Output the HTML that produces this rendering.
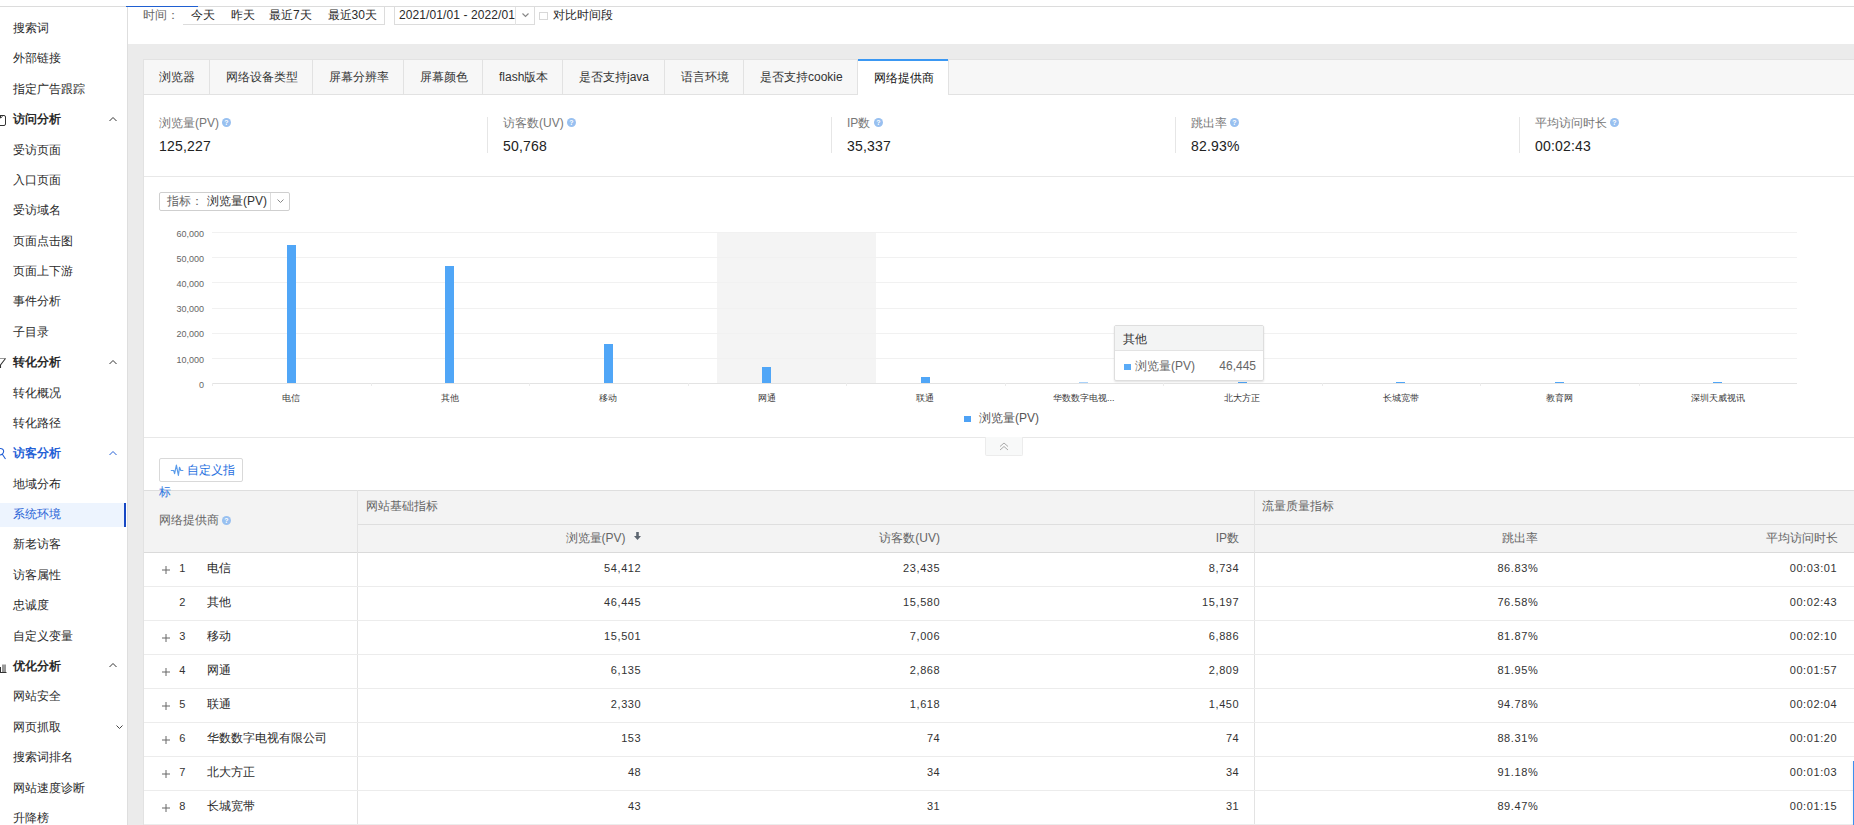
<!DOCTYPE html><html><head><meta charset="utf-8"><style>
*{margin:0;padding:0;box-sizing:border-box}
html,body{width:1854px;height:825px;overflow:hidden;background:#fff;font-family:"Liberation Sans",sans-serif;color:#2a2a2a}
.a{position:absolute}
.t{position:absolute;white-space:nowrap;font-size:12px;line-height:12px}
.hl{position:absolute;height:1px}
.vl{position:absolute;width:1px}
</style></head><body>
<div class="a" style="left:128px;top:7px;width:1726px;height:818px;background:#ebebeb"></div>
<div class="a" style="left:128px;top:7px;width:1726px;height:37px;background:#fff"></div>
<div class="a" style="left:0px;top:6px;width:1854px;height:1px;background:#dcdcdc"></div>
<div class="a" style="left:0px;top:7px;width:127px;height:818px;background:#fff"></div>
<div class="a" style="left:127px;top:7px;width:1px;height:818px;background:#dedede"></div>
<div class="t" style="left:13px;top:22.00px;color:#2a2a2a;">搜索词</div>
<div class="t" style="left:13px;top:52.38px;color:#2a2a2a;">外部链接</div>
<div class="t" style="left:13px;top:82.76px;color:#2a2a2a;">指定广告跟踪</div>
<svg class="a" style="left:109px;top:116.64px" width="8" height="5" viewBox="0 0 8 5"><path d="M0.5 4 L4 0.5 L7.5 4" fill="none" stroke="#333" stroke-width="1"/></svg>
<div class="t" style="left:13px;top:113.14px;color:#2a2a2a;font-weight:bold;">访问分析</div>
<div class="t" style="left:13px;top:143.52px;color:#2a2a2a;">受访页面</div>
<div class="t" style="left:13px;top:173.90px;color:#2a2a2a;">入口页面</div>
<div class="t" style="left:13px;top:204.28px;color:#2a2a2a;">受访域名</div>
<div class="t" style="left:13px;top:234.66px;color:#2a2a2a;">页面点击图</div>
<div class="t" style="left:13px;top:265.04px;color:#2a2a2a;">页面上下游</div>
<div class="t" style="left:13px;top:295.42px;color:#2a2a2a;">事件分析</div>
<div class="t" style="left:13px;top:325.80px;color:#2a2a2a;">子目录</div>
<svg class="a" style="left:109px;top:359.68px" width="8" height="5" viewBox="0 0 8 5"><path d="M0.5 4 L4 0.5 L7.5 4" fill="none" stroke="#333" stroke-width="1"/></svg>
<div class="t" style="left:13px;top:356.18px;color:#2a2a2a;font-weight:bold;">转化分析</div>
<div class="t" style="left:13px;top:386.56px;color:#2a2a2a;">转化概况</div>
<div class="t" style="left:13px;top:416.94px;color:#2a2a2a;">转化路径</div>
<svg class="a" style="left:109px;top:450.82px" width="8" height="5" viewBox="0 0 8 5"><path d="M0.5 4 L4 0.5 L7.5 4" fill="none" stroke="#2561d6" stroke-width="1"/></svg>
<div class="t" style="left:13px;top:447.32px;color:#2561d6;font-weight:bold;">访客分析</div>
<div class="t" style="left:13px;top:477.70px;color:#2a2a2a;">地域分布</div>
<div class="a" style="left:0px;top:503px;width:124px;height:24px;background:#edf4fe"></div>
<div class="a" style="left:124px;top:503px;width:2px;height:24px;background:#1748c4"></div>
<div class="t" style="left:13px;top:508.08px;color:#2561d6;">系统环境</div>
<div class="t" style="left:13px;top:538.46px;color:#2a2a2a;">新老访客</div>
<div class="t" style="left:13px;top:568.84px;color:#2a2a2a;">访客属性</div>
<div class="t" style="left:13px;top:599.22px;color:#2a2a2a;">忠诚度</div>
<div class="t" style="left:13px;top:629.60px;color:#2a2a2a;">自定义变量</div>
<svg class="a" style="left:109px;top:663.48px" width="8" height="5" viewBox="0 0 8 5"><path d="M0.5 4 L4 0.5 L7.5 4" fill="none" stroke="#333" stroke-width="1"/></svg>
<div class="t" style="left:13px;top:659.98px;color:#2a2a2a;font-weight:bold;">优化分析</div>
<div class="t" style="left:13px;top:690.36px;color:#2a2a2a;">网站安全</div>
<svg class="a" style="left:116px;top:724.74px" width="7" height="5" viewBox="0 0 7 5"><path d="M0.5 0.5 L3.5 3.5 L6.5 0.5" fill="none" stroke="#444" stroke-width="1"/></svg>
<div class="t" style="left:13px;top:720.74px;color:#2a2a2a;">网页抓取</div>
<div class="t" style="left:13px;top:751.12px;color:#2a2a2a;">搜索词排名</div>
<div class="t" style="left:13px;top:781.50px;color:#2a2a2a;">网站速度诊断</div>
<div class="t" style="left:13px;top:811.88px;color:#2a2a2a;">升降榜</div>
<svg class="a" style="left:0px;top:111.14px" width="8" height="16" viewBox="0 0 8 16"><path d="M-5 4.5 H4 Q5.5 4.5 5.5 6 V13 Q5.5 14.5 4 14.5 H-5" fill="none" stroke="#333" stroke-width="1"/><path d="M0.5 4.5 V7 L2.5 5.5" fill="none" stroke="#333" stroke-width="1"/></svg>
<svg class="a" style="left:0px;top:354.18px" width="8" height="16" viewBox="0 0 8 16"><path d="M-2 4.5 H5.5" stroke="#999" stroke-width="1"/><path d="M5.5 4.5 L0.5 11 V14" fill="none" stroke="#333" stroke-width="1.1"/></svg>
<svg class="a" style="left:0px;top:445.32px" width="8" height="16" viewBox="0 0 8 16"><path d="M-3 5.5 Q0 2 3 4.5 Q4.5 6.5 2.5 9 Q1 10 -1 10 M2.5 9.5 L5.5 14" fill="none" stroke="#2561d6" stroke-width="1.1"/></svg>
<svg class="a" style="left:0px;top:657.98px" width="8" height="16" viewBox="0 0 8 16"><path d="M0.5 9 V14 M3 6.5 V14 M5 6.5 V14 M-1 14.5 H6.5" fill="none" stroke="#333" stroke-width="1"/></svg>
<div class="t" style="left:143px;top:9px;color:#666">时间：</div>
<div class="a" style="left:183px;top:6px;width:202px;height:19px;border:1px solid #dcdcdc;border-top:none;border-left:none;background:#fff"></div>
<div class="t" style="left:191px;top:9px;">今天</div>
<div class="t" style="left:230.5px;top:9px;">昨天</div>
<div class="t" style="left:269px;top:9px;">最近7天</div>
<div class="t" style="left:327.5px;top:9px;">最近30天</div>
<div class="a" style="left:394px;top:6px;width:141px;height:19px;border:1px solid #dcdcdc;border-top:none;background:#fff"></div>
<div class="a" style="left:515px;top:6px;width:1px;height:19px;background:#e3e3e3"></div>
<div class="t" style="left:399px;top:9px;letter-spacing:0.1px">2021/01/01 - 2022/01</div>
<svg class="a" style="left:522px;top:13px" width="7" height="5" viewBox="0 0 7 5"><path d="M0.5 0.5 L3.5 3.5 L6.5 0.5" fill="none" stroke="#888" stroke-width="1.2"/></svg>
<div class="a" style="left:539px;top:12px;width:9px;height:8px;border:1px solid #d8d8d8;background:#fff"></div>
<div class="t" style="left:553px;top:9px;">对比时间段</div>
<div class="a" style="left:128px;top:6px;width:1726px;height:1px;background:#dcdcdc"></div>
<div class="a" style="left:126px;top:6px;width:72px;height:1px;background:#1f5fd1"></div>
<div class="a" style="left:143px;top:59px;width:1711px;height:766px;background:#fff;border-left:1px solid #e2e2e2;border-top:1px solid #e2e2e2"></div>
<div class="a" style="left:144px;top:60px;width:1710px;height:34px;background:#f7f7f7"></div>
<div class="a" style="left:144px;top:94px;width:1710px;height:1px;background:#e2e2e2"></div>
<div class="t" style="left:159px;top:71px;color:#333">浏览器</div>
<div class="a" style="left:209px;top:60px;width:1px;height:34px;background:#e2e2e2"></div>
<div class="t" style="left:226px;top:71px;color:#333">网络设备类型</div>
<div class="a" style="left:312px;top:60px;width:1px;height:34px;background:#e2e2e2"></div>
<div class="t" style="left:329px;top:71px;color:#333">屏幕分辨率</div>
<div class="a" style="left:403px;top:60px;width:1px;height:34px;background:#e2e2e2"></div>
<div class="t" style="left:420px;top:71px;color:#333">屏幕颜色</div>
<div class="a" style="left:482px;top:60px;width:1px;height:34px;background:#e2e2e2"></div>
<div class="t" style="left:499px;top:71px;color:#333">flash版本</div>
<div class="a" style="left:562px;top:60px;width:1px;height:34px;background:#e2e2e2"></div>
<div class="t" style="left:579px;top:71px;color:#333">是否支持java</div>
<div class="a" style="left:664px;top:60px;width:1px;height:34px;background:#e2e2e2"></div>
<div class="t" style="left:681px;top:71px;color:#333">语言环境</div>
<div class="a" style="left:743px;top:60px;width:1px;height:34px;background:#e2e2e2"></div>
<div class="t" style="left:760px;top:71px;color:#333">是否支持cookie</div>
<div class="a" style="left:857px;top:60px;width:1px;height:34px;background:#e2e2e2"></div>
<div class="a" style="left:858px;top:60px;width:90px;height:35px;background:#fff"></div>
<div class="a" style="left:858px;top:59px;width:90px;height:2px;background:#3b98f3"></div>
<div class="t" style="left:874px;top:71.5px;color:#111">网络提供商</div>
<div class="a" style="left:948px;top:60px;width:1px;height:34px;background:#e2e2e2"></div>
<div class="t" style="left:159px;top:117px;color:#777">浏览量(PV)</div>
<div class="a" style="left:222px;top:118px;width:9px;height:9px;border-radius:50%;background:#98c0f0;color:#fff;font-size:7px;line-height:9px;text-align:center;font-weight:bold">?</div>
<div class="t" style="left:159px;top:138.5px;font-size:14px;line-height:14px;color:#222;letter-spacing:0.2px">125,227</div>
<div class="a" style="left:487px;top:117px;width:1px;height:36px;background:#e6e6e6"></div>
<div class="t" style="left:503px;top:117px;color:#777">访客数(UV)</div>
<div class="a" style="left:567px;top:118px;width:9px;height:9px;border-radius:50%;background:#98c0f0;color:#fff;font-size:7px;line-height:9px;text-align:center;font-weight:bold">?</div>
<div class="t" style="left:503px;top:138.5px;font-size:14px;line-height:14px;color:#222;letter-spacing:0.2px">50,768</div>
<div class="a" style="left:831px;top:117px;width:1px;height:36px;background:#e6e6e6"></div>
<div class="t" style="left:847px;top:117px;color:#777">IP数</div>
<div class="a" style="left:874px;top:118px;width:9px;height:9px;border-radius:50%;background:#98c0f0;color:#fff;font-size:7px;line-height:9px;text-align:center;font-weight:bold">?</div>
<div class="t" style="left:847px;top:138.5px;font-size:14px;line-height:14px;color:#222;letter-spacing:0.2px">35,337</div>
<div class="a" style="left:1175px;top:117px;width:1px;height:36px;background:#e6e6e6"></div>
<div class="t" style="left:1191px;top:117px;color:#777">跳出率</div>
<div class="a" style="left:1230px;top:118px;width:9px;height:9px;border-radius:50%;background:#98c0f0;color:#fff;font-size:7px;line-height:9px;text-align:center;font-weight:bold">?</div>
<div class="t" style="left:1191px;top:138.5px;font-size:14px;line-height:14px;color:#222;letter-spacing:0.2px">82.93%</div>
<div class="a" style="left:1519px;top:117px;width:1px;height:36px;background:#e6e6e6"></div>
<div class="t" style="left:1535px;top:117px;color:#777">平均访问时长</div>
<div class="a" style="left:1610px;top:118px;width:9px;height:9px;border-radius:50%;background:#98c0f0;color:#fff;font-size:7px;line-height:9px;text-align:center;font-weight:bold">?</div>
<div class="t" style="left:1535px;top:138.5px;font-size:14px;line-height:14px;color:#222;letter-spacing:0.2px">00:02:43</div>
<div class="a" style="left:144px;top:176px;width:1710px;height:1px;background:#e8e8e8"></div>
<div class="a" style="left:159px;top:192px;width:131px;height:19px;border:1px solid #cfcfcf;border-radius:2px;background:#fff"></div>
<div class="a" style="left:270px;top:193px;width:1px;height:17px;background:#dcdcdc"></div>
<div class="t" style="left:167px;top:195px;color:#666">指标：</div>
<div class="t" style="left:207px;top:195px;color:#333">浏览量(PV)</div>
<svg class="a" style="left:277px;top:199px" width="7" height="5" viewBox="0 0 7 5"><path d="M0.5 0.5 L3.5 3.5 L6.5 0.5" fill="none" stroke="#888" stroke-width="1"/></svg>
<div class="a" style="left:717px;top:232px;width:159px;height:151px;background:#f4f4f4"></div>
<div class="hl" style="left:212px;top:232.00px;width:1585px;background:#f1f1f1"></div>
<div class="t" style="right:1650px;top:229.50px;text-align:right;font-size:9px;line-height:9px;color:#666">60,000</div>
<div class="hl" style="left:212px;top:257.22px;width:1585px;background:#f1f1f1"></div>
<div class="t" style="right:1650px;top:254.72px;text-align:right;font-size:9px;line-height:9px;color:#666">50,000</div>
<div class="hl" style="left:212px;top:282.43px;width:1585px;background:#f1f1f1"></div>
<div class="t" style="right:1650px;top:279.93px;text-align:right;font-size:9px;line-height:9px;color:#666">40,000</div>
<div class="hl" style="left:212px;top:307.65px;width:1585px;background:#f1f1f1"></div>
<div class="t" style="right:1650px;top:305.15px;text-align:right;font-size:9px;line-height:9px;color:#666">30,000</div>
<div class="hl" style="left:212px;top:332.87px;width:1585px;background:#f1f1f1"></div>
<div class="t" style="right:1650px;top:330.37px;text-align:right;font-size:9px;line-height:9px;color:#666">20,000</div>
<div class="hl" style="left:212px;top:358.08px;width:1585px;background:#f1f1f1"></div>
<div class="t" style="right:1650px;top:355.58px;text-align:right;font-size:9px;line-height:9px;color:#666">10,000</div>
<div class="hl" style="left:212px;top:383.30px;width:1585px;background:#e3e3e3"></div>
<div class="t" style="right:1650px;top:380.80px;text-align:right;font-size:9px;line-height:9px;color:#666">0</div>
<div class="a" style="left:286.75px;top:245.49px;width:9px;height:137.81px;background:#50a6f7"></div>
<div class="t" style="left:191.25px;top:394px;width:200px;text-align:center;font-size:9px;line-height:9px;color:#3a3a3a">电信</div>
<div class="vl" style="left:212.00px;top:383px;height:3px;background:#ececec"></div>
<div class="a" style="left:445.25px;top:265.58px;width:9px;height:117.72px;background:#50a6f7"></div>
<div class="t" style="left:349.75px;top:394px;width:200px;text-align:center;font-size:9px;line-height:9px;color:#3a3a3a">其他</div>
<div class="vl" style="left:370.50px;top:383px;height:3px;background:#ececec"></div>
<div class="a" style="left:603.75px;top:343.61px;width:9px;height:39.69px;background:#50a6f7"></div>
<div class="t" style="left:508.25px;top:394px;width:200px;text-align:center;font-size:9px;line-height:9px;color:#3a3a3a">移动</div>
<div class="vl" style="left:529.00px;top:383px;height:3px;background:#ececec"></div>
<div class="a" style="left:762.25px;top:367.23px;width:9px;height:16.07px;background:#50a6f7"></div>
<div class="t" style="left:666.75px;top:394px;width:200px;text-align:center;font-size:9px;line-height:9px;color:#3a3a3a">网通</div>
<div class="vl" style="left:687.50px;top:383px;height:3px;background:#ececec"></div>
<div class="a" style="left:920.75px;top:376.82px;width:9px;height:6.48px;background:#50a6f7"></div>
<div class="t" style="left:825.25px;top:394px;width:200px;text-align:center;font-size:9px;line-height:9px;color:#3a3a3a">联通</div>
<div class="vl" style="left:846.00px;top:383px;height:3px;background:#ececec"></div>
<div class="a" style="left:1079.25px;top:381.80px;width:9px;height:1.50px;background:#a9d2fa"></div>
<div class="t" style="left:983.75px;top:394px;width:200px;text-align:center;font-size:9px;line-height:9px;color:#3a3a3a">华数数字电视...</div>
<div class="vl" style="left:1004.50px;top:383px;height:3px;background:#ececec"></div>
<div class="a" style="left:1237.75px;top:381.80px;width:9px;height:1.50px;background:#50a6f7"></div>
<div class="t" style="left:1142.25px;top:394px;width:200px;text-align:center;font-size:9px;line-height:9px;color:#3a3a3a">北大方正</div>
<div class="vl" style="left:1163.00px;top:383px;height:3px;background:#ececec"></div>
<div class="a" style="left:1396.25px;top:381.80px;width:9px;height:1.50px;background:#50a6f7"></div>
<div class="t" style="left:1300.75px;top:394px;width:200px;text-align:center;font-size:9px;line-height:9px;color:#3a3a3a">长城宽带</div>
<div class="vl" style="left:1321.50px;top:383px;height:3px;background:#ececec"></div>
<div class="a" style="left:1554.75px;top:381.80px;width:9px;height:1.50px;background:#50a6f7"></div>
<div class="t" style="left:1459.25px;top:394px;width:200px;text-align:center;font-size:9px;line-height:9px;color:#3a3a3a">教育网</div>
<div class="vl" style="left:1480.00px;top:383px;height:3px;background:#ececec"></div>
<div class="a" style="left:1713.25px;top:381.80px;width:9px;height:1.50px;background:#50a6f7"></div>
<div class="t" style="left:1617.75px;top:394px;width:200px;text-align:center;font-size:9px;line-height:9px;color:#3a3a3a">深圳天威视讯</div>
<div class="vl" style="left:1638.50px;top:383px;height:3px;background:#ececec"></div>
<div class="a" style="left:1114px;top:325px;width:150px;height:56px;background:rgba(255,255,255,0.96);border:1px solid #dedede;border-radius:2px;box-shadow:0 1px 2px rgba(0,0,0,0.12)"></div>
<div class="a" style="left:1115px;top:326px;width:148px;height:25px;background:#f3f4f4;border-bottom:1px solid #e3e3e3"></div>
<div class="t" style="left:1123px;top:333px;color:#333">其他</div>
<div class="a" style="left:1124px;top:364px;width:7px;height:6px;background:#5aabf7"></div>
<div class="t" style="left:1135px;top:360px;color:#666">浏览量(PV)</div>
<div class="t" style="right:598px;top:360px;text-align:right;color:#666">46,445</div>
<div class="a" style="left:964px;top:416px;width:7px;height:6px;background:#4ea2f5"></div>
<div class="t" style="left:979px;top:412px;color:#555">浏览量(PV)</div>
<div class="a" style="left:144px;top:437px;width:1710px;height:1px;background:#e8e8e8"></div>
<div class="a" style="left:985px;top:437px;width:38px;height:19px;background:#f8f9f9;border:1px solid #ececec;border-top:none;border-radius:0 0 2px 2px"></div>
<svg class="a" style="left:999px;top:442px" width="10" height="9" viewBox="0 0 10 9"><path d="M1 4.5 L5 1 L9 4.5 M1 8 L5 4.5 L9 8" fill="none" stroke="#aaa" stroke-width="1"/></svg>
<div class="a" style="left:159px;top:458px;width:84px;height:24px;border:1px solid #d9d9d9;border-radius:2px;background:#fff"></div>
<svg class="a" style="left:165px;top:458px" width="30" height="24" viewBox="0 0 30 24"><path d="M6.3 12.5 H8.7 L9.6 15.7 L11.4 7.2 L13.4 17.5 L14.5 9.3 L15.8 12.5 H17.9" fill="none" stroke="#5b9cea" stroke-width="1.2" stroke-linejoin="round" stroke-linecap="round"/></svg>
<div class="t" style="left:187px;top:463.5px;color:#1f6fe0">自定义指</div>
<div class="a" style="left:144px;top:490px;width:1710px;height:62px;background:#f3f3f3"></div>
<div class="a" style="left:144px;top:490px;width:1710px;height:1px;background:#dedede"></div>
<div class="a" style="left:357px;top:524px;width:1497px;height:1px;background:#dedede"></div>
<div class="a" style="left:144px;top:552px;width:1710px;height:1px;background:#dadada"></div>
<div class="a" style="left:357px;top:490px;width:1px;height:335px;background:#e3e3e3"></div>
<div class="a" style="left:1254px;top:490px;width:1px;height:335px;background:#e3e3e3"></div>
<div class="t" style="left:159px;top:485.5px;color:#2a74e0">标</div>
<div class="t" style="left:158.5px;top:514px;color:#666">网络提供商</div>
<div class="a" style="left:222px;top:516px;width:9px;height:9px;border-radius:50%;background:#98c0f0;color:#fff;font-size:7px;line-height:9px;text-align:center;font-weight:bold">?</div>
<div class="t" style="left:365.5px;top:500px;color:#666">网站基础指标</div>
<div class="t" style="left:1262px;top:500px;color:#666">流量质量指标</div>
<div class="t" style="right:1228.5px;top:532px;text-align:right;color:#666">浏览量(PV)</div>
<div class="t" style="right:914px;top:532px;text-align:right;color:#666">访客数(UV)</div>
<div class="t" style="right:615px;top:532px;text-align:right;color:#666">IP数</div>
<div class="t" style="right:316px;top:532px;text-align:right;color:#666">跳出率</div>
<div class="t" style="right:16.5px;top:532px;text-align:right;color:#666">平均访问时长</div>
<svg class="a" style="left:634px;top:532px" width="7" height="8" viewBox="0 0 7 8"><path d="M2.2 0 H4.8 V4 H7 L3.5 8 L0 4 H2.2 Z" fill="#5d6670"/></svg>
<svg class="a" style="left:162px;top:565.5px" width="8" height="8" viewBox="0 0 8 8"><path d="M0 4 H8 M4 0 V8" stroke="#666" stroke-width="1"/></svg>
<div class="t" style="left:172.3px;top:563.0px;width:20px;text-align:center;color:#333;font-size:11px;line-height:11px">1</div>
<div class="t" style="left:207px;top:561.5px;color:#2a2a2a">电信</div>
<div class="t" style="right:1212.7px;top:563.0px;text-align:right;color:#333;font-size:11px;line-height:11px;letter-spacing:0.6px">54,412</div>
<div class="t" style="right:913.7px;top:563.0px;text-align:right;color:#333;font-size:11px;line-height:11px;letter-spacing:0.6px">23,435</div>
<div class="t" style="right:614.7px;top:563.0px;text-align:right;color:#333;font-size:11px;line-height:11px;letter-spacing:0.6px">8,734</div>
<div class="t" style="right:315.70000000000005px;top:563.0px;text-align:right;color:#333;font-size:11px;line-height:11px;letter-spacing:0.6px">86.83%</div>
<div class="t" style="right:16.700000000000045px;top:563.0px;text-align:right;color:#333;font-size:11px;line-height:11px;letter-spacing:0.6px">00:03:01</div>
<div class="a" style="left:144px;top:586px;width:1710px;height:1px;background:#ececec"></div>
<div class="t" style="left:172.3px;top:597.0px;width:20px;text-align:center;color:#333;font-size:11px;line-height:11px">2</div>
<div class="t" style="left:207px;top:595.5px;color:#2a2a2a">其他</div>
<div class="t" style="right:1212.7px;top:597.0px;text-align:right;color:#333;font-size:11px;line-height:11px;letter-spacing:0.6px">46,445</div>
<div class="t" style="right:913.7px;top:597.0px;text-align:right;color:#333;font-size:11px;line-height:11px;letter-spacing:0.6px">15,580</div>
<div class="t" style="right:614.7px;top:597.0px;text-align:right;color:#333;font-size:11px;line-height:11px;letter-spacing:0.6px">15,197</div>
<div class="t" style="right:315.70000000000005px;top:597.0px;text-align:right;color:#333;font-size:11px;line-height:11px;letter-spacing:0.6px">76.58%</div>
<div class="t" style="right:16.700000000000045px;top:597.0px;text-align:right;color:#333;font-size:11px;line-height:11px;letter-spacing:0.6px">00:02:43</div>
<div class="a" style="left:144px;top:620px;width:1710px;height:1px;background:#ececec"></div>
<svg class="a" style="left:162px;top:633.5px" width="8" height="8" viewBox="0 0 8 8"><path d="M0 4 H8 M4 0 V8" stroke="#666" stroke-width="1"/></svg>
<div class="t" style="left:172.3px;top:631.0px;width:20px;text-align:center;color:#333;font-size:11px;line-height:11px">3</div>
<div class="t" style="left:207px;top:629.5px;color:#2a2a2a">移动</div>
<div class="t" style="right:1212.7px;top:631.0px;text-align:right;color:#333;font-size:11px;line-height:11px;letter-spacing:0.6px">15,501</div>
<div class="t" style="right:913.7px;top:631.0px;text-align:right;color:#333;font-size:11px;line-height:11px;letter-spacing:0.6px">7,006</div>
<div class="t" style="right:614.7px;top:631.0px;text-align:right;color:#333;font-size:11px;line-height:11px;letter-spacing:0.6px">6,886</div>
<div class="t" style="right:315.70000000000005px;top:631.0px;text-align:right;color:#333;font-size:11px;line-height:11px;letter-spacing:0.6px">81.87%</div>
<div class="t" style="right:16.700000000000045px;top:631.0px;text-align:right;color:#333;font-size:11px;line-height:11px;letter-spacing:0.6px">00:02:10</div>
<div class="a" style="left:144px;top:654px;width:1710px;height:1px;background:#ececec"></div>
<svg class="a" style="left:162px;top:667.5px" width="8" height="8" viewBox="0 0 8 8"><path d="M0 4 H8 M4 0 V8" stroke="#666" stroke-width="1"/></svg>
<div class="t" style="left:172.3px;top:665.0px;width:20px;text-align:center;color:#333;font-size:11px;line-height:11px">4</div>
<div class="t" style="left:207px;top:663.5px;color:#2a2a2a">网通</div>
<div class="t" style="right:1212.7px;top:665.0px;text-align:right;color:#333;font-size:11px;line-height:11px;letter-spacing:0.6px">6,135</div>
<div class="t" style="right:913.7px;top:665.0px;text-align:right;color:#333;font-size:11px;line-height:11px;letter-spacing:0.6px">2,868</div>
<div class="t" style="right:614.7px;top:665.0px;text-align:right;color:#333;font-size:11px;line-height:11px;letter-spacing:0.6px">2,809</div>
<div class="t" style="right:315.70000000000005px;top:665.0px;text-align:right;color:#333;font-size:11px;line-height:11px;letter-spacing:0.6px">81.95%</div>
<div class="t" style="right:16.700000000000045px;top:665.0px;text-align:right;color:#333;font-size:11px;line-height:11px;letter-spacing:0.6px">00:01:57</div>
<div class="a" style="left:144px;top:688px;width:1710px;height:1px;background:#ececec"></div>
<svg class="a" style="left:162px;top:701.5px" width="8" height="8" viewBox="0 0 8 8"><path d="M0 4 H8 M4 0 V8" stroke="#666" stroke-width="1"/></svg>
<div class="t" style="left:172.3px;top:699.0px;width:20px;text-align:center;color:#333;font-size:11px;line-height:11px">5</div>
<div class="t" style="left:207px;top:697.5px;color:#2a2a2a">联通</div>
<div class="t" style="right:1212.7px;top:699.0px;text-align:right;color:#333;font-size:11px;line-height:11px;letter-spacing:0.6px">2,330</div>
<div class="t" style="right:913.7px;top:699.0px;text-align:right;color:#333;font-size:11px;line-height:11px;letter-spacing:0.6px">1,618</div>
<div class="t" style="right:614.7px;top:699.0px;text-align:right;color:#333;font-size:11px;line-height:11px;letter-spacing:0.6px">1,450</div>
<div class="t" style="right:315.70000000000005px;top:699.0px;text-align:right;color:#333;font-size:11px;line-height:11px;letter-spacing:0.6px">94.78%</div>
<div class="t" style="right:16.700000000000045px;top:699.0px;text-align:right;color:#333;font-size:11px;line-height:11px;letter-spacing:0.6px">00:02:04</div>
<div class="a" style="left:144px;top:722px;width:1710px;height:1px;background:#ececec"></div>
<svg class="a" style="left:162px;top:735.5px" width="8" height="8" viewBox="0 0 8 8"><path d="M0 4 H8 M4 0 V8" stroke="#666" stroke-width="1"/></svg>
<div class="t" style="left:172.3px;top:733.0px;width:20px;text-align:center;color:#333;font-size:11px;line-height:11px">6</div>
<div class="t" style="left:207px;top:731.5px;color:#2a2a2a">华数数字电视有限公司</div>
<div class="t" style="right:1212.7px;top:733.0px;text-align:right;color:#333;font-size:11px;line-height:11px;letter-spacing:0.6px">153</div>
<div class="t" style="right:913.7px;top:733.0px;text-align:right;color:#333;font-size:11px;line-height:11px;letter-spacing:0.6px">74</div>
<div class="t" style="right:614.7px;top:733.0px;text-align:right;color:#333;font-size:11px;line-height:11px;letter-spacing:0.6px">74</div>
<div class="t" style="right:315.70000000000005px;top:733.0px;text-align:right;color:#333;font-size:11px;line-height:11px;letter-spacing:0.6px">88.31%</div>
<div class="t" style="right:16.700000000000045px;top:733.0px;text-align:right;color:#333;font-size:11px;line-height:11px;letter-spacing:0.6px">00:01:20</div>
<div class="a" style="left:144px;top:756px;width:1710px;height:1px;background:#ececec"></div>
<svg class="a" style="left:162px;top:769.5px" width="8" height="8" viewBox="0 0 8 8"><path d="M0 4 H8 M4 0 V8" stroke="#666" stroke-width="1"/></svg>
<div class="t" style="left:172.3px;top:767.0px;width:20px;text-align:center;color:#333;font-size:11px;line-height:11px">7</div>
<div class="t" style="left:207px;top:765.5px;color:#2a2a2a">北大方正</div>
<div class="t" style="right:1212.7px;top:767.0px;text-align:right;color:#333;font-size:11px;line-height:11px;letter-spacing:0.6px">48</div>
<div class="t" style="right:913.7px;top:767.0px;text-align:right;color:#333;font-size:11px;line-height:11px;letter-spacing:0.6px">34</div>
<div class="t" style="right:614.7px;top:767.0px;text-align:right;color:#333;font-size:11px;line-height:11px;letter-spacing:0.6px">34</div>
<div class="t" style="right:315.70000000000005px;top:767.0px;text-align:right;color:#333;font-size:11px;line-height:11px;letter-spacing:0.6px">91.18%</div>
<div class="t" style="right:16.700000000000045px;top:767.0px;text-align:right;color:#333;font-size:11px;line-height:11px;letter-spacing:0.6px">00:01:03</div>
<div class="a" style="left:144px;top:790px;width:1710px;height:1px;background:#ececec"></div>
<svg class="a" style="left:162px;top:803.5px" width="8" height="8" viewBox="0 0 8 8"><path d="M0 4 H8 M4 0 V8" stroke="#666" stroke-width="1"/></svg>
<div class="t" style="left:172.3px;top:801.0px;width:20px;text-align:center;color:#333;font-size:11px;line-height:11px">8</div>
<div class="t" style="left:207px;top:799.5px;color:#2a2a2a">长城宽带</div>
<div class="t" style="right:1212.7px;top:801.0px;text-align:right;color:#333;font-size:11px;line-height:11px;letter-spacing:0.6px">43</div>
<div class="t" style="right:913.7px;top:801.0px;text-align:right;color:#333;font-size:11px;line-height:11px;letter-spacing:0.6px">31</div>
<div class="t" style="right:614.7px;top:801.0px;text-align:right;color:#333;font-size:11px;line-height:11px;letter-spacing:0.6px">31</div>
<div class="t" style="right:315.70000000000005px;top:801.0px;text-align:right;color:#333;font-size:11px;line-height:11px;letter-spacing:0.6px">89.47%</div>
<div class="t" style="right:16.700000000000045px;top:801.0px;text-align:right;color:#333;font-size:11px;line-height:11px;letter-spacing:0.6px">00:01:15</div>
<div class="a" style="left:144px;top:824px;width:1710px;height:1px;background:#ececec"></div>
<div class="a" style="left:1850px;top:761px;width:3px;height:64px;background:linear-gradient(to right,rgba(0,0,0,0),rgba(0,0,0,0.04))"></div>
<div class="a" style="left:1853px;top:761px;width:1px;height:64px;background:#3b8ff0"></div>
</body></html>
